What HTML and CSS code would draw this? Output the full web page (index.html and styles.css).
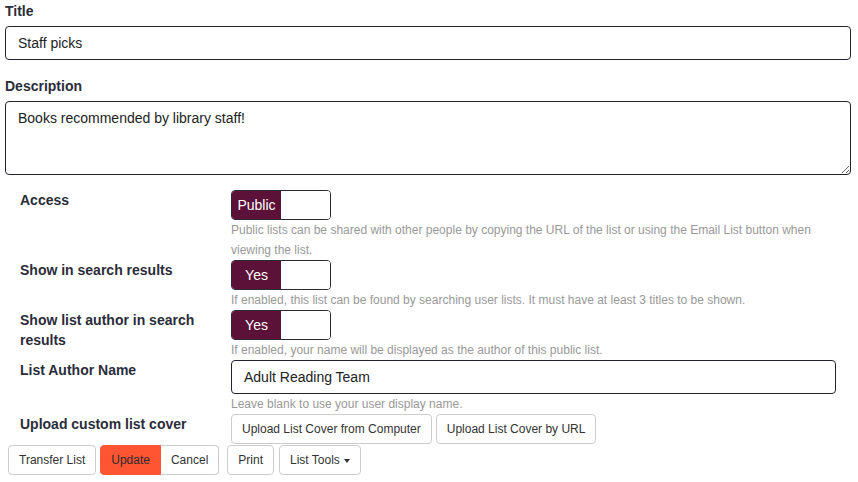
FILE: index.html
```html
<!DOCTYPE html>
<html lang="en">
<head>
    <meta charset="UTF-8">
    <meta name="viewport" content="width=device-width, initial-scale=1.0">
    <title>Edit List</title>
    <link rel="stylesheet" href="styles.css">
</head>
<body>
    <form class="list-form">
        <!-- Title and description -->
        <div class="field">
            <label class="field-label" for="title">Title</label>
            <input class="text-input" id="title" type="text" value="Staff picks">
        </div>
        <div class="field">
            <label class="field-label" for="description">Description</label>
            <textarea class="text-area" id="description">Books recommended by library staff!</textarea>
        </div>

        <!-- Settings rows -->
        <div class="settings">
            <div class="setting-label">Access</div>
            <div class="setting-control">
                <div class="toggle"><span class="toggle-on">Public</span><span class="toggle-off"></span></div>
                <p class="help">Public lists can be shared with other people by copying the URL of the list or using the Email List button when viewing the list.</p>
            </div>

            <div class="setting-label">Show in search results</div>
            <div class="setting-control">
                <div class="toggle"><span class="toggle-on">Yes</span><span class="toggle-off"></span></div>
                <p class="help">If enabled, this list can be found by searching user lists. It must have at least 3 titles to be shown.</p>
            </div>

            <div class="setting-label">Show list author in search results</div>
            <div class="setting-control">
                <div class="toggle"><span class="toggle-on">Yes</span><span class="toggle-off"></span></div>
                <p class="help">If enabled, your name will be displayed as the author of this public list.</p>
            </div>

            <div class="setting-label">List Author Name</div>
            <div class="setting-control">
                <input class="text-input author-input" type="text" value="Adult Reading Team">
                <p class="help">Leave blank to use your user display name.</p>
            </div>

            <div class="setting-label">Upload custom list cover</div>
            <div class="setting-control upload-buttons">
                <button type="button" class="btn">Upload List Cover from Computer</button>
                <button type="button" class="btn">Upload List Cover by URL</button>
            </div>
        </div>

        <!-- Action buttons -->
        <div class="actions">
            <button type="button" class="btn">Transfer List</button>
            <div class="btn-group">
                <button type="button" class="btn btn-update">Update</button>
                <button type="button" class="btn">Cancel</button>
            </div>
            <button type="button" class="btn btn-print">Print</button>
            <button type="button" class="btn">List Tools <span class="caret"></span></button>
        </div>
    </form>
</body>
</html>
```

FILE: styles.css
```css
body {
    margin: 0;
    font-family: "Liberation Sans", Arial, sans-serif;
    color: #2b2c3a;
    background-color: #fff;
}

.list-form {
    padding: 0 7px 0 5px;
}

.field {
    display: flex;
    flex-direction: column;
    margin-bottom: 15px;
}

.field-label {
    font-size: 14px;
    font-weight: bold;
    line-height: 22px;
    margin-bottom: 4px;
}

.text-input,
.text-area {
    box-sizing: border-box;
    font-family: inherit;
    font-size: 14px;
    color: #222;
    border: 1px solid #23232f;
    border-radius: 4px;
    padding: 0 12px;
    height: 34px;
    width: 100%;
}

.text-area {
    height: 74px;
    padding: 7px 12px;
    line-height: 18px;
    resize: vertical;
}

.settings {
    display: grid;
    grid-template-columns: 211px 605px;
    padding-left: 15px;
}

.setting-label {
    font-size: 14px;
    font-weight: bold;
    line-height: 20px;
    padding-right: 16px;
}

.toggle {
    display: flex;
    box-sizing: border-box;
    width: 100px;
    height: 30px;
    border: 1px solid #2b2b35;
    border-radius: 4px;
    overflow: hidden;
}

.toggle-on {
    width: 49px;
    background-color: #5b1138;
    color: #fff;
    font-size: 14px;
    line-height: 28px;
    text-align: center;
}

.toggle-off {
    flex: 1;
    background-color: #fff;
}

.help {
    margin: 0;
    font-size: 12px;
    line-height: 20px;
    color: #999;
}

.author-input {
    height: 34px;
}

.upload-buttons {
    display: flex;
    gap: 4px;
}

.btn {
    box-sizing: border-box;
    height: 30px;
    padding: 0 10px;
    font-family: inherit;
    font-size: 12px;
    color: #333;
    background-color: #fff;
    border: 1px solid #ccc;
    border-radius: 4px;
    cursor: pointer;
}

.actions {
    display: flex;
    align-items: center;
    gap: 4px;
    padding-left: 3px;
    margin-top: 1px;
}

.btn-group {
    display: flex;
}

.btn-group .btn:first-child {
    border-top-right-radius: 0;
    border-bottom-right-radius: 0;
}

.btn-group .btn:last-child {
    border-top-left-radius: 0;
    border-bottom-left-radius: 0;
    border-left: none;
}

.btn-update {
    color: #2b2b2b;
    background-color: #ff5533;
    border-color: #ff5533;
}

.btn-print {
    margin-left: 4px;
    margin-right: 1px;
}

.caret {
    display: inline-block;
    width: 0;
    height: 0;
    margin-left: 1px;
    vertical-align: middle;
    border-top: 4px solid #333;
    border-left: 3.5px solid transparent;
    border-right: 3.5px solid transparent;
}
```
